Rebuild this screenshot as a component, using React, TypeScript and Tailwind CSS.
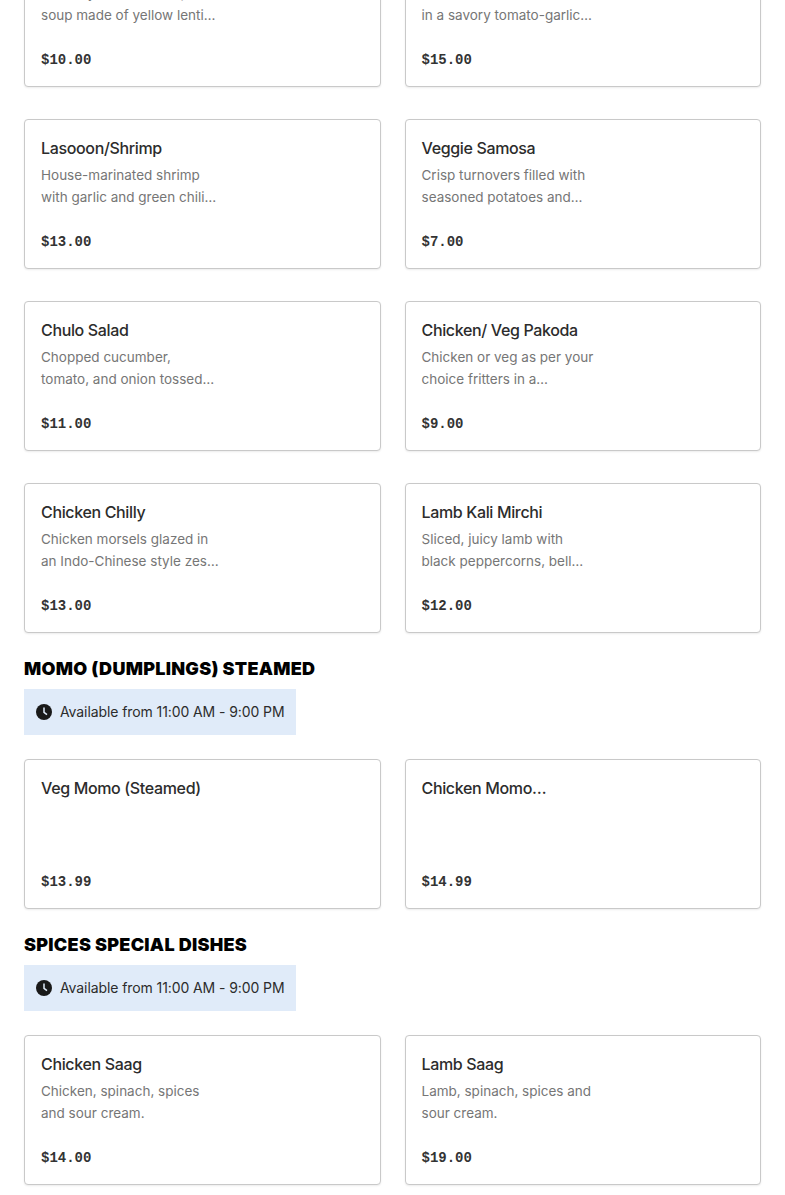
import React from "react";

const Clock = () => (
  <svg width="16" height="16" viewBox="0 0 16 16" className="shrink-0">
    <circle cx="8" cy="8" r="8" fill="#191919" />
    <path d="M8 3.5V8.3L11 10.6" fill="none" stroke="#e0ebf9" strokeWidth="1.5" />
  </svg>
);

type Item = { name: string; l1?: string; l2?: string; price: string };

const Card = ({ name, l1, l2, price }: Item) => (
  <div className="h-[150px] rounded-[4px] border border-[#c9c9c9] bg-white shadow-[0_1px_2px_rgba(0,0,0,0.08)] px-4 pt-4 flex flex-col">
    <div className="text-[16px] leading-[24px] font-medium text-[#2c2c2c] font-['Inter',sans-serif] tracking-[-0.35px]">{name}</div>
    <div className="mt-1 h-[44px] text-[13.5px] leading-[22px] text-[#767676] font-['Inter',sans-serif]">
      <div>{l1}</div>
      <div>{l2}</div>
    </div>
    <div className="mt-[23px] text-[14px] leading-[22px] font-bold text-[#333333] font-['Liberation_Mono',monospace]">{price}</div>
  </div>
);

const Grid = ({ items }: { items: Item[] }) => (
  <div className="grid grid-cols-2 gap-x-6 gap-y-8">
    {items.map((i) => (
      <Card key={i.name} {...i} />
    ))}
  </div>
);

const Section = ({ title }: { title: string }) => (
  <div>
    <h2 className="text-[18px] leading-[24px] font-black text-black uppercase font-['Inter',sans-serif] tracking-[0.27px]">{title}</h2>
    <div className="mt-2 mb-6 w-[272px] h-[46px] bg-[#e0ebf9] flex items-center gap-2 pl-3 text-[14px] leading-[20px] text-[#2c2c2c] font-['Inter',sans-serif] tracking-[-0.09px]">
      <Clock />
      <span className="-mt-px">Available from 11:00 AM - 9:00 PM</span>
    </div>
  </div>
);

export default function App() {
  return (
    <div className="h-[1195px] overflow-hidden bg-white px-6">
      <div className="-mt-[63px]">
        <Grid
          items={[
            { name: "Dal Soup", l1: "A hearty, warm, and spiced", l2: "soup made of yellow lenti…", price: "$10.00" },
            { name: "Chicken Chilli", l1: "Tender chicken cooked", l2: "in a savory tomato-garlic…", price: "$15.00" },
            { name: "Lasooon/Shrimp", l1: "House-marinated shrimp", l2: "with garlic and green chili…", price: "$13.00" },
            { name: "Veggie Samosa", l1: "Crisp turnovers filled with", l2: "seasoned potatoes and…", price: "$7.00" },
            { name: "Chulo Salad", l1: "Chopped cucumber,", l2: "tomato, and onion tossed…", price: "$11.00" },
            { name: "Chicken/ Veg Pakoda", l1: "Chicken or veg as per your", l2: "choice fritters in a…", price: "$9.00" },
            { name: "Chicken Chilly", l1: "Chicken morsels glazed in", l2: "an Indo-Chinese style zes…", price: "$13.00" },
            { name: "Lamb Kali Mirchi", l1: "Sliced, juicy lamb with", l2: "black peppercorns, bell…", price: "$12.00" },
          ]}
        />
      </div>
      <div className="mt-6">
        <Section title="Momo (Dumplings) Steamed" />
        <Grid
          items={[
            { name: "Veg Momo (Steamed)", price: "$13.99" },
            { name: "Chicken Momo…", price: "$14.99" },
          ]}
        />
      </div>
      <div className="mt-6">
        <Section title="Spices Special Dishes" />
        <Grid
          items={[
            { name: "Chicken Saag", l1: "Chicken, spinach, spices", l2: "and sour cream.", price: "$14.00" },
            { name: "Lamb Saag", l1: "Lamb, spinach, spices and", l2: "sour cream.", price: "$19.00" },
          ]}
        />
      </div>
    </div>
  );
}
